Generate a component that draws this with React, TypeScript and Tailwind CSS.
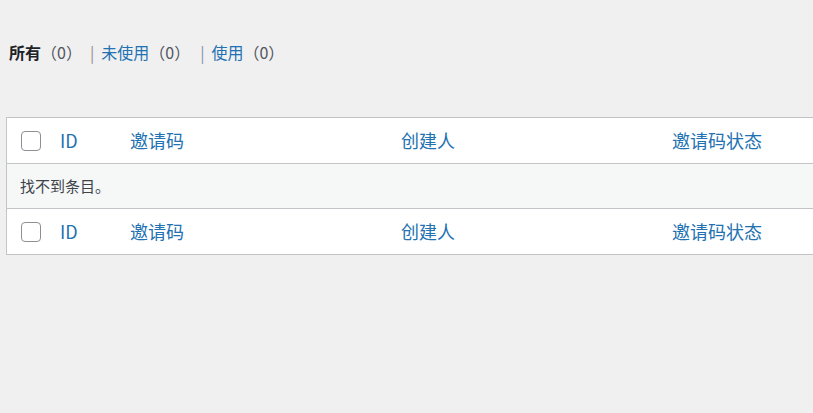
import React from "react";

const font = { fontFamily: '"Noto Sans CJK SC", "Noto Sans", sans-serif' };

function Checkbox() {
    return <span className="block h-5 w-5 rounded-[4px] border border-[#8c8f94] bg-white" />;
}

function HeadRow({ bottom }: { bottom?: boolean }) {
    return (
        <div
            className={`grid h-[46px] grid-cols-[43px_70px_271px_271px_271px] items-center bg-white text-[18px] text-[#2271b1] ${
                bottom ? "border-t border-[#c3c4c7]" : "border-b border-[#c3c4c7]"
            }`}
        >
            <div className="pl-[14px]">
                <Checkbox />
            </div>
            <div className="pl-[10px]">ID</div>
            <div className="pl-[10px]">邀请码</div>
            <div className="pl-[10px]">创建人</div>
            <div className="pl-[10px]">邀请码状态</div>
        </div>
    );
}

export default function App() {
    return (
        <div className="h-[413px] w-[813px] overflow-hidden bg-[#f0f0f1]" style={font}>
            <div className="flex items-center pl-[9px] pt-[39px] text-[16px] leading-[26px]">
                <span className="font-bold text-[#1d2327]">所有</span>
                <span className="text-[#50575e]">（0）</span>
                <span className="pl-[8px] pr-[7px] text-[#9a8f8a]">|</span>
                <span className="text-[#2271b1]">未使用</span>
                <span className="text-[#50575e]">（0）</span>
                <span className="pl-[10px] pr-[7px] text-[#7f94aa]">|</span>
                <span className="text-[#2271b1]">使用</span>
                <span className="text-[#50575e]">（0）</span>
            </div>

            <div className="ml-[6px] mt-[52px] w-[940px] border border-[#c3c4c7]">
                <HeadRow />
                <div className="flex h-[44px] items-center bg-[#f6f7f7] pl-[13px] text-[15px] text-[#3c434a]">
                    找不到条目。
                </div>
                <HeadRow bottom />
            </div>
        </div>
    );
}
